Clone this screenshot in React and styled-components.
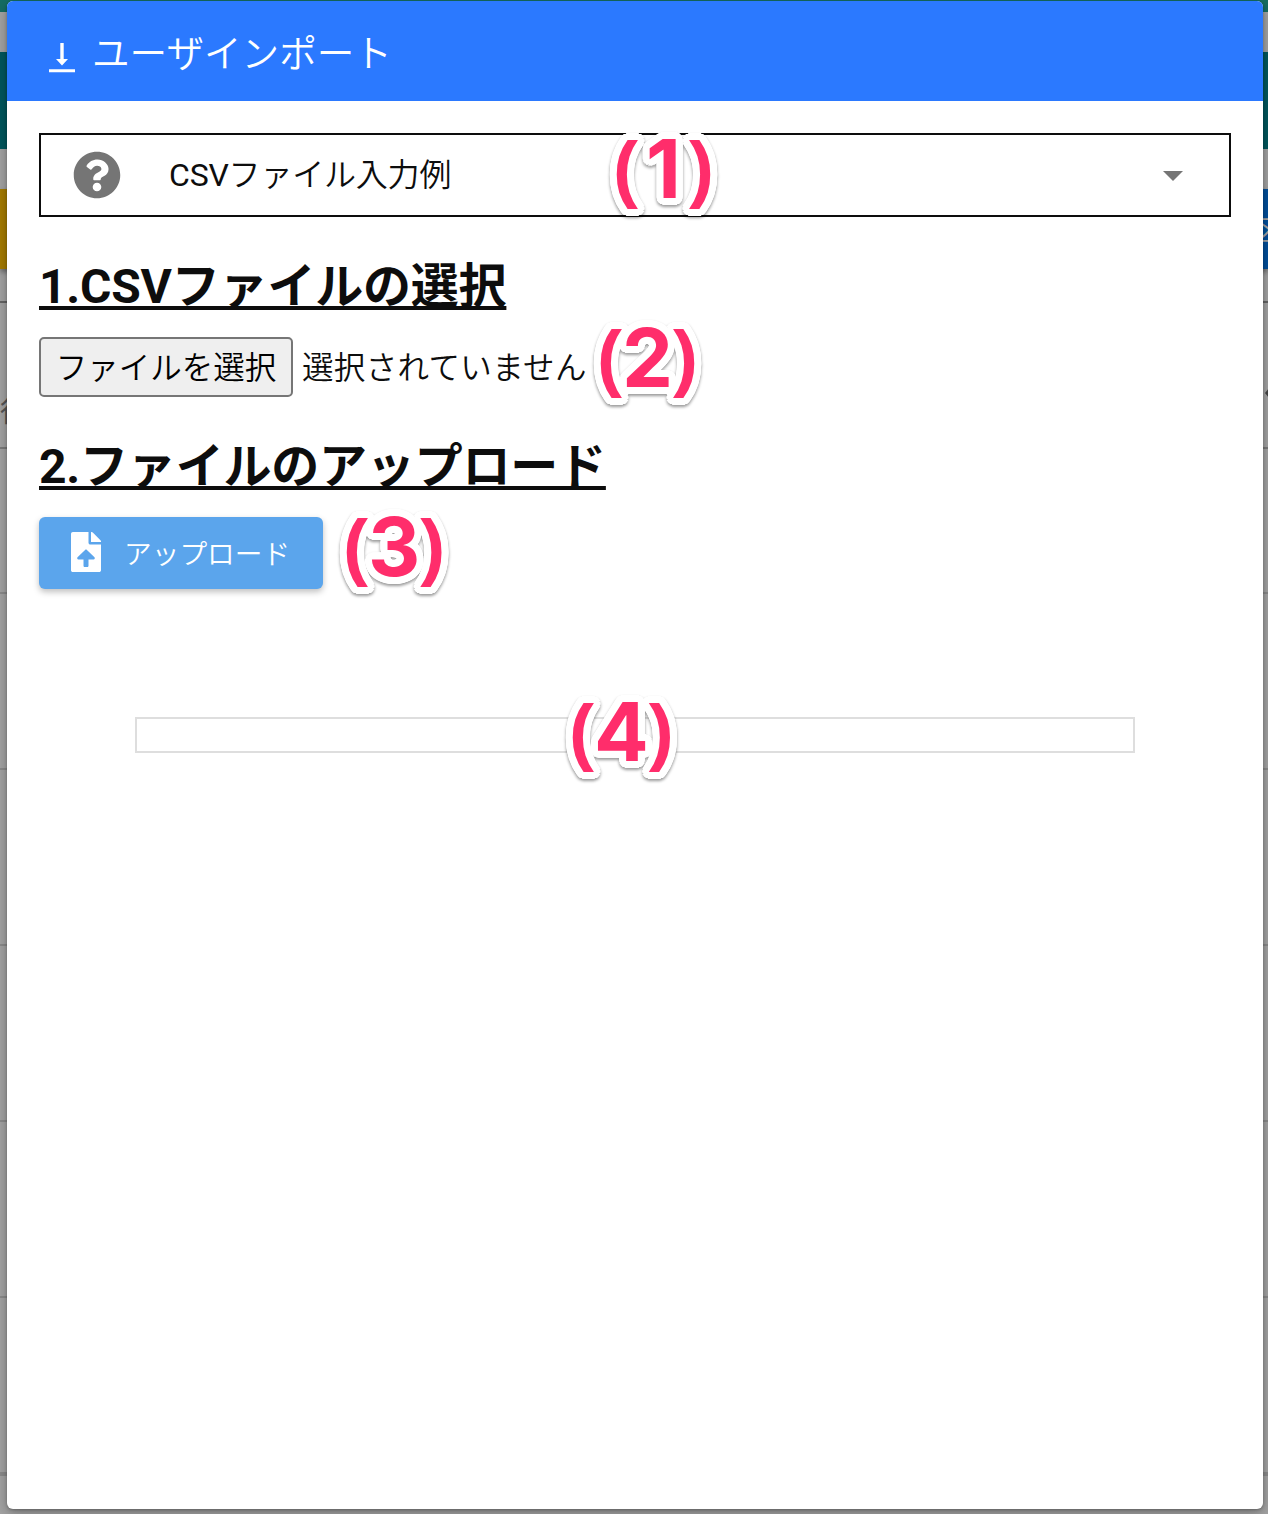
import React from "react";
import styled, { createGlobalStyle } from "styled-components";
import { FaQuestionCircle, FaFileUpload } from "react-icons/fa";

const GlobalStyle = createGlobalStyle`
  body { margin: 0; background: #9e9e9e; }
  *, *::before, *::after { box-sizing: border-box; }
`;

const Screen = styled.div`
  position: relative;
  width: 1268px;
  height: 1514px;
  overflow: hidden;
  font-family: Roboto, "Noto Sans CJK JP", sans-serif;
  color: #0d0d0d;
`;

const Backdrop = styled.div`
  display: flex;
  flex-direction: column;
  height: 100%;
  background: #a4a4a4;
`;

const Band = styled.div`
  flex: none;
  height: ${(p) => p.$h}px;
  background: ${(p) => p.$color || "transparent"};
`;

const ActionBand = styled.div`
  display: flex;
  flex: none;
  justify-content: space-between;
  height: 80px;
`;

const ActionButton = styled.div`
  display: flex;
  align-items: center;
  justify-content: flex-end;
  width: 60px;
  height: 80px;
  background: ${(p) => p.$color};
  color: #a6a6a6;
  font-size: 28px;
  font-weight: 350;
  overflow: hidden;
  box-shadow: 0 3px 5px rgba(0, 0, 0, 0.35);
`;

const ActionLabel = styled.span`
  margin-right: -14px;
`;

const TableHead = styled.div`
  display: flex;
  flex: none;
  align-items: center;
  justify-content: space-between;
  height: 148px;
  margin-top: 32px;
  padding-top: 36px;
  border-top: 2px solid #656565;
  border-bottom: 2px solid #7b7b7b;
`;

const HeadLabel = styled.span`
  margin-top: 34px;
  font-size: 28px;
  color: #555;
`;

const SortMark = styled.svg`
  width: 3px;
  height: 10px;
  fill: #444;
`;

const TableRow = styled.div`
  flex: none;
  height: ${(p) => p.$h}px;
  border-bottom: ${(p) => p.$line || 2}px solid #8b8b8b;
`;

const Dialog = styled.section`
  position: absolute;
  top: 1px;
  left: 7px;
  display: flex;
  flex-direction: column;
  width: 1256px;
  height: 1508px;
  border-radius: 6px;
  overflow: hidden;
  background: #fff;
  box-shadow: 0 4px 14px rgba(0, 0, 0, 0.3), 0 1px 3px rgba(0, 0, 0, 0.25);
`;

const Header = styled.header`
  display: flex;
  flex: none;
  align-items: center;
  height: 100px;
  padding: 0 42px;
  gap: 17px;
  background: #2b79ff;
  color: #fff;
`;

const HeaderIcon = styled.svg`
  width: 26px;
  height: 30px;
  margin-top: 13px;
  fill: currentColor;
`;

const Title = styled.h1`
  margin: 5px 0 0;
  font-size: 37.6px;
  font-weight: 350;
  line-height: 64px;
`;

const Body = styled.div`
  display: flex;
  flex-direction: column;
  align-items: flex-start;
  padding: 32px;
`;

const Expander = styled.button`
  display: flex;
  align-items: center;
  width: 100%;
  height: 84px;
  padding: 0 46px 0 32px;
  border: 2px solid #0d0d0d;
  background: #fff;
  color: inherit;
  font: inherit;
  text-align: left;
`;

const HelpIcon = styled(FaQuestionCircle)`
  flex: none;
  width: 48px;
  height: 48px;
  margin-right: 48px;
  color: #757575;
`;

const ExpanderLabel = styled.span`
  flex: 1;
  font-size: 32px;
  font-weight: 350;
  line-height: 48px;
  letter-spacing: -0.2px;
`;

const Latin = styled.span`
  font-weight: 400;
`;

const Caret = styled.svg`
  width: 20px;
  height: 10px;
  margin-top: 2px;
  fill: #757575;
`;

const StepTitle = styled.h2`
  margin: 32px 0 0;
  height: 72px;
  padding-top: 2px;
  font-size: 48px;
  font-weight: 700;
  line-height: 72px;
  letter-spacing: -0.2px;
  text-decoration: underline;
  text-decoration-thickness: 4px;
  text-decoration-skip-ink: none;
  text-underline-offset: 3px;
`;

const FileField = styled.div`
  display: flex;
  align-items: center;
  height: 60px;
  margin-top: 16px;
  gap: 9px;
  color: #0d0d0d;
  font-size: 31.5px;
  font-weight: 350;
  white-space: nowrap;
`;

const FileButton = styled.button`
  width: 254px;
  height: 60px;
  padding: 0 0 4px;
  border: 2px solid #767676;
  border-radius: 5px;
  background: #efefef;
  color: #000;
  font: inherit;
`;

const FileStatus = styled.span`
  padding-bottom: 4px;
  letter-spacing: 0.35px;
`;

const UploadButton = styled.button`
  display: flex;
  align-items: center;
  width: 284px;
  height: 72px;
  margin-top: 16px;
  padding: 0 32px 2px;
  gap: 23px;
  border: 0;
  border-radius: 6px;
  background: #5ba5ec;
  color: #fff;
  font: inherit;
  font-size: 27.7px;
  font-weight: 350;
  white-space: nowrap;
  box-shadow: 0 3px 6px rgba(0, 0, 0, 0.25);
`;

const UploadIcon = styled(FaFileUpload)`
  flex: none;
  width: 30px;
  height: 40px;
`;

const Progress = styled.div`
  align-self: center;
  width: 1000px;
  height: 36px;
  margin-top: 128px;
  border: 2px solid #dedede;
`;

const outline = [7, 4]
  .flatMap((r) =>
    Array.from({ length: 32 }, (_, i) => {
      const a = (i * Math.PI) / 16;
      return `${(r * Math.cos(a)).toFixed(2)}px ${(r * Math.sin(a)).toFixed(2)}px 0 #fff`;
    })
  )
  .join(", ");

const Marker = styled.span`
  position: absolute;
  left: ${(p) => p.$x}px;
  top: ${(p) => p.$y}px;
  display: flex;
  align-items: baseline;
  justify-content: space-between;
  width: 101px;
  height: 84px;
  font-weight: 700;
  line-height: 84px;
  color: #ff2d6b;
  text-shadow: ${outline};
  filter: drop-shadow(0 2px 1.5px rgba(0, 0, 0, 0.4));
`;

const Paren = styled.span`
  font-family: "Liberation Sans", Arial, sans-serif;
  font-size: 75px;
  transform: translateY(-4px);
`;

const Digit = styled.span`
  font-family: Inter, "Liberation Sans", sans-serif;
  font-size: 81px;
`;

const rows = [145, 176, 176, 176, 176, 178];

const markers = [
  { digit: "1", x: 613, y: 127 },
  { digit: "2", x: 597, y: 316 },
  { digit: "3", x: 343, y: 505 },
  { digit: "4", x: 569, y: 690 },
];

export default function App() {
  return (
    <Screen>
      <GlobalStyle />
      <Backdrop>
        <Band $h={12} $color="#156d63" />
        <Band $h={40} />
        <Band $h={97} $color="#00575d" />
        <Band $h={40} />
        <ActionBand>
          <ActionButton $color="#a67c00" />
          <ActionButton $color="#004f9b">
            <ActionLabel>区</ActionLabel>
          </ActionButton>
        </ActionBand>
        <TableHead>
          <HeadLabel>役</HeadLabel>
          <SortMark viewBox="0 0 4 10">
            <path d="M4 0 0 5l4 5z" />
          </SortMark>
        </TableHead>
        {rows.map((h, i) => (
          <TableRow key={i} $h={h} $line={i === 5 ? 4 : 2} />
        ))}
      </Backdrop>
      <Dialog role="dialog">
        <Header>
          <HeaderIcon viewBox="0 0 26 30">
            <path d="M11.3 0h3.4v16H19l-6 6.5L7 16h4.3zM0 26.2h26v3H0z" />
          </HeaderIcon>
          <Title>ユーザインポート</Title>
        </Header>
        <Body>
          <Expander>
            <HelpIcon />
            <ExpanderLabel>
              <Latin>CSV</Latin>ファイル入力例
            </ExpanderLabel>
            <Caret viewBox="0 0 20 10">
              <path d="M0 0h20L10 10z" />
            </Caret>
          </Expander>
          <StepTitle>1.CSVファイルの選択</StepTitle>
          <FileField>
            <FileButton>ファイルを選択</FileButton>
            <FileStatus>選択されていません</FileStatus>
          </FileField>
          <StepTitle>2.ファイルのアップロード</StepTitle>
          <UploadButton>
            <UploadIcon />
            アップロード
          </UploadButton>
          <Progress />
        </Body>
      </Dialog>
      {markers.map((m) => (
        <Marker key={m.digit} $x={m.x} $y={m.y}>
          <Paren>(</Paren>
          <Digit>{m.digit}</Digit>
          <Paren>)</Paren>
        </Marker>
      ))}
    </Screen>
  );
}
